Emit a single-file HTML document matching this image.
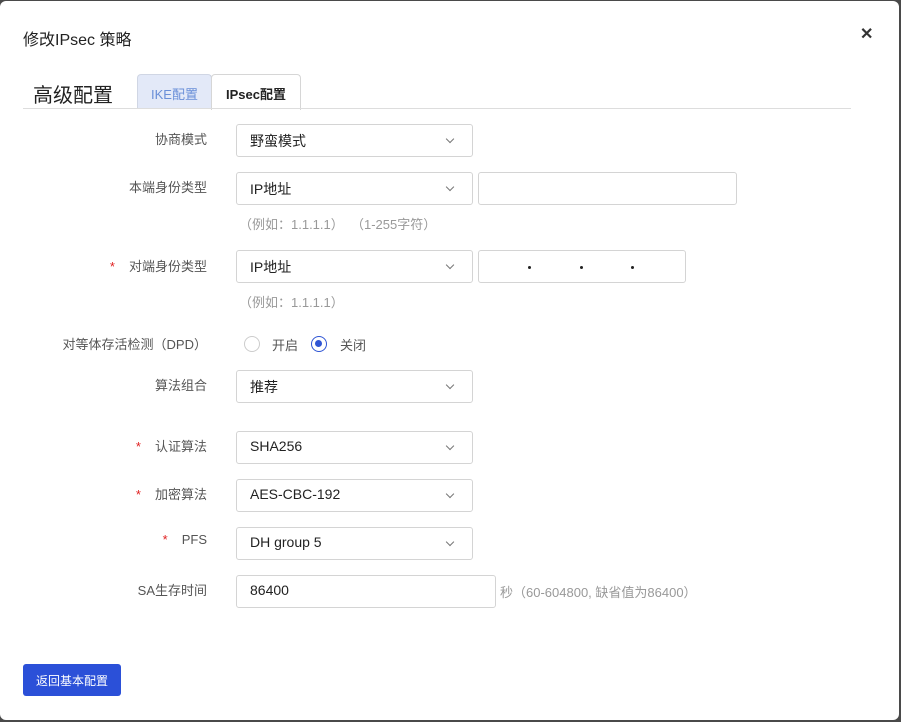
<!DOCTYPE html>
<html><head><meta charset="utf-8"><style>
*{box-sizing:border-box;margin:0;padding:0}
body{width:901px;height:722px;background:#4a4a4a;font-family:"Liberation Sans","Noto Sans CJK SC",sans-serif;position:relative;overflow:hidden}
.dlg{position:absolute;left:0;top:1px;width:899px;height:719px;background:#fff;border-radius:6px}
.a{position:absolute}
.lbl{position:absolute;right:692px;font-size:13px;color:#555;text-align:right;white-space:nowrap}
.sel{position:absolute;left:236px;width:237px;height:33px;border:1px solid #d4d4d4;border-radius:3px;font-size:14px;color:#222;padding:6px 0 0 13px}
.sel:after{content:"";position:absolute;right:19px;top:11px;width:5px;height:5px;border-right:1.3px solid #777;border-bottom:1.3px solid #777;transform:rotate(45deg)}
.inp{position:absolute;height:33px;border:1px solid #d4d4d4;border-radius:3px;font-size:14px;color:#222;padding:6px 0 0 13px}
.hint{position:absolute;left:239px;font-size:13px;color:#999;white-space:pre}
.star{color:#e02020;margin-right:14px}
.dot{position:absolute;top:15px;width:3px;height:3px;background:#222;border-radius:50%}
</style></head><body>
<div class="dlg">
<div class="a" style="left:23px;top:25px;font-size:16px;color:#222">修改IPsec 策略</div>
<div class="a" style="left:860px;top:23px;font-size:16px;color:#333;font-weight:bold">✕</div>
<div class="a" style="left:33px;top:78px;font-size:20px;color:#222">高级配置</div>
<div class="a" style="left:137px;top:73px;width:75px;height:35px;background:#e3e9f8;border:1px solid #d0d6e4;border-bottom:none;border-radius:4px 4px 0 0;font-size:13px;color:#6a8fd8;text-align:center;padding-top:9px">IKE配置</div>
<div class="a" style="left:211px;top:73px;width:90px;height:36px;background:#fff;border:1px solid #d6d6d6;border-bottom:none;border-radius:4px 4px 0 0;font-size:13px;color:#222;font-weight:bold;text-align:center;padding-top:9px">IPsec配置</div>
<div class="a" style="left:23px;top:107px;width:828px;height:1px;background:#ddd"></div>

<div class="lbl" style="top:128px">协商模式</div>
<div class="sel" style="top:123px">野蛮模式</div>

<div class="lbl" style="top:176px">本端身份类型</div>
<div class="sel" style="top:171px">IP地址</div>
<div class="inp" style="left:478px;top:171px;width:259px"></div>
<div class="hint" style="top:213px">（例如：1.1.1.1）  （1-255字符）</div>

<div class="lbl" style="top:255px"><span class="star">*</span>对端身份类型</div>
<div class="sel" style="top:249px">IP地址</div>
<div class="inp" style="left:478px;top:249px;width:208px"><div class="dot" style="left:49px"></div><div class="dot" style="left:101px"></div><div class="dot" style="left:152px"></div></div>
<div class="hint" style="top:291px">（例如：1.1.1.1）</div>

<div class="lbl" style="top:333px">对等体存活检测（DPD）</div>
<div class="a" style="left:244px;top:335px;width:16px;height:16px;border:1px solid #ccc;border-radius:50%"></div>
<div class="a" style="left:272px;top:334px;font-size:13px;color:#555">开启</div>
<div class="a" style="left:311px;top:335px;width:16px;height:16px;border:1.5px solid #2f55d4;border-radius:50%"><div style="position:absolute;left:3px;top:3px;width:7px;height:7px;background:#2f55d4;border-radius:50%"></div></div>
<div class="a" style="left:340px;top:334px;font-size:13px;color:#555">关闭</div>

<div class="lbl" style="top:374px">算法组合</div>
<div class="sel" style="top:369px">推荐</div>

<div class="lbl" style="top:435px"><span class="star">*</span>认证算法</div>
<div class="sel" style="top:430px">SHA256</div>
<div class="lbl" style="top:483px"><span class="star">*</span>加密算法</div>
<div class="sel" style="top:478px">AES-CBC-192</div>
<div class="lbl" style="top:531px"><span class="star">*</span>PFS</div>
<div class="sel" style="top:526px">DH group 5</div>

<div class="lbl" style="top:579px">SA生存时间</div>
<div class="inp" style="left:236px;top:574px;width:260px">86400</div>
<div class="a" style="left:500px;top:581px;font-size:13px;color:#999">秒（60-604800, 缺省值为86400）</div>

<div class="a" style="left:23px;top:663px;width:98px;height:32px;background:#2b50d8;border-radius:3px;color:#fff;font-size:12px;text-align:center;padding-top:8px">返回基本配置</div>
</div>
</body></html>
